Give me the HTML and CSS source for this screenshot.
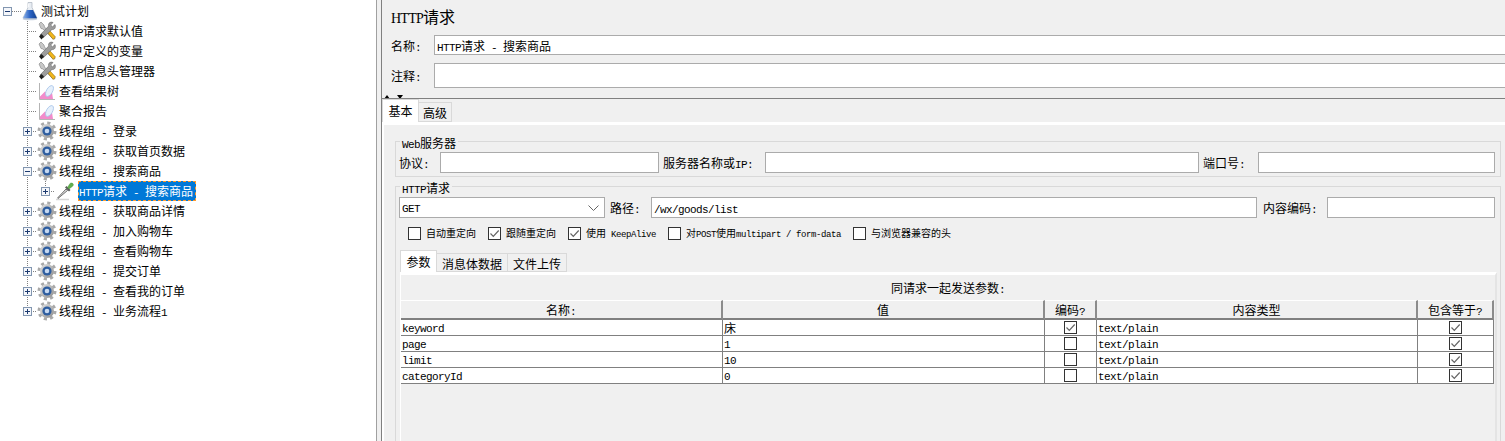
FILE: index.html
```html
<!DOCTYPE html>
<html lang="zh-CN">
<head>
<meta charset="utf-8">
<title>HTTP请求</title>
<link rel="stylesheet" href="styles.css">
</head>
<body>
<svg class="sprites" xmlns="http://www.w3.org/2000/svg" aria-hidden="true">
  <defs>
    <linearGradient id="liq" x1="0" x2="1" y1="0" y2="0"><stop offset="0" stop-color="#8fb4ea"/><stop offset=".5" stop-color="#2a63c4"/><stop offset="1" stop-color="#123f8e"/></linearGradient>
    <linearGradient id="gearg" x1="0" x2="1" y1="0" y2="1"><stop offset="0" stop-color="#e4e4e4"/><stop offset="1" stop-color="#8c8c8c"/></linearGradient>
  </defs>
  <symbol id="i-plus" viewBox="0 0 9 9"><rect x=".5" y=".5" width="8" height="8" fill="#f4f6fa" stroke="#8296b0"/><path d="M2 4.500h5M4.500 2v5" stroke="#1c3a70" fill="none"/></symbol>
  <symbol id="i-minus" viewBox="0 0 9 9"><rect x=".5" y=".5" width="8" height="8" fill="#f4f6fa" stroke="#8296b0"/><path d="M2 4.500h5" stroke="#1c3a70" fill="none"/></symbol>
  <symbol id="i-flask" viewBox="0 0 20 20"><ellipse cx="10" cy="18" rx="7.500" ry="1.300" fill="#c4cede"/><path d="M8 1.500h4v5l5 10.500H3L8 6.500z" fill="#e8edf3" stroke="#a9b3bf" stroke-width=".7"/><path d="M7 9h6l4 8.300H3z" fill="url(#liq)"/><path d="M8.700 2.500v4" stroke="#fff"/></symbol>
  <symbol id="i-tools" viewBox="0 0 20 20"><path d="M2 3l2-2 3 3 .5 2L17 15.500l1 2.500-2.500-.5L6 8 4 7.500z" fill="#c8c8c8" stroke="#6d6d6d" stroke-width=".5"/><path d="M10.500 11.500l2-2 6 6.500-2.300 2.500z" fill="#f2b71c" stroke="#8f6a08" stroke-width=".6"/><path d="M18 3.500l-2.500 2.300-1.800-1.800L16 1.500c-2-1-4.500 0-4.500 2.300 0 .8.200 1.200.2 1.200L3 14l3 3 9-8.600c2.500.6 4.200-1.800 3-4.900z" fill="#9d9d9d" stroke="#555" stroke-width=".5"/><path d="M2 15.500l2.500-2.500 2.500 2.500L4.500 18.500z" fill="#222"/></symbol>
  <symbol id="i-graph" viewBox="0 0 20 20"><path d="M2.500 2v16.500H18" stroke="#b4b4b4" fill="none"/><path d="M3 18v-2.500l5-5 3 2 4-1 1 6.500z" fill="#f28ccb"/><ellipse cx="12.500" cy="10" rx="3" ry="6" transform="rotate(30 12.500 10)" fill="#e6f0fb" stroke="#a6c4e8" stroke-width=".8"/></symbol>
  <symbol id="i-gear" viewBox="0 0 20 20"><circle cx="10" cy="10" r="8" fill="none" stroke="#a9a9a9" stroke-width="3" stroke-dasharray="3.100 3.180"/><circle cx="10" cy="10" r="7" fill="url(#gearg)"/><circle cx="10" cy="10" r="4.600" fill="#2e5d9f"/><circle cx="10" cy="10" r="2.300" fill="#c7d9f1"/></symbol>
  <symbol id="i-drop" viewBox="0 0 20 20"><path d="M1 18.500h13" stroke="#d6d6d6" stroke-width="1.500"/><path d="M3 17.500L2.500 17 11 8l1.500 1.500z" fill="#d9d9d9" stroke="#555" stroke-width=".8"/><path d="M10 6.500L14 10.500l1.500-1.500L11.500 5z" fill="#5b5b5b"/><path d="M12.500 6.500L15 2.500c1-1 3-.5 3.300.8.200 1-.3 1.700-1 2.200l-3.300 2.500z" fill="#62b04e" stroke="#3c8a2f" stroke-width=".4"/></symbol>
  <symbol id="i-box" viewBox="0 0 13 13"><rect x=".5" y=".5" width="12" height="12" fill="#fff" stroke="#333"/></symbol>
  <symbol id="i-chk" viewBox="0 0 13 13"><rect x=".5" y=".5" width="12" height="12" fill="#fff" stroke="#333"/><path d="M2.500 6.500L5.300 9.300 10.700 3.500" fill="none" stroke="#666" stroke-width="1.200"/></symbol>
</svg>

<nav class="tree">
  <div class="row d0"><svg class="exp"><use href="#i-minus"/></svg><svg class="ico ico-root"><use href="#i-flask"/></svg><span class="lab">测试计划</span></div>
  <div class="row d1 guide"><span class="noexp"></span><svg class="ico"><use href="#i-tools"/></svg><span class="lab"><span class="l">HTTP</span>请求默认值</span></div>
  <div class="row d1 guide"><span class="noexp"></span><svg class="ico"><use href="#i-tools"/></svg><span class="lab">用户定义的变量</span></div>
  <div class="row d1 guide"><span class="noexp"></span><svg class="ico"><use href="#i-tools"/></svg><span class="lab"><span class="l">HTTP</span>信息头管理器</span></div>
  <div class="row d1 guide"><span class="noexp"></span><svg class="ico"><use href="#i-graph"/></svg><span class="lab">查看结果树</span></div>
  <div class="row d1 guide"><span class="noexp"></span><svg class="ico"><use href="#i-graph"/></svg><span class="lab">聚合报告</span></div>
  <div class="row d1 guide"><svg class="exp"><use href="#i-plus"/></svg><svg class="ico"><use href="#i-gear"/></svg><span class="lab">线程组<span class="l"> - </span>登录</span></div>
  <div class="row d1 guide"><svg class="exp"><use href="#i-plus"/></svg><svg class="ico"><use href="#i-gear"/></svg><span class="lab">线程组<span class="l"> - </span>获取首页数据</span></div>
  <div class="row d1 guide"><svg class="exp"><use href="#i-minus"/></svg><svg class="ico"><use href="#i-gear"/></svg><span class="lab">线程组<span class="l"> - </span>搜索商品</span></div>
  <div class="row d2 guide"><svg class="exp"><use href="#i-plus"/></svg><svg class="ico"><use href="#i-drop"/></svg><span class="lab sel"><span class="l">HTTP</span>请求<span class="l"> - </span>搜索商品</span></div>
  <div class="row d1 guide"><svg class="exp"><use href="#i-plus"/></svg><svg class="ico"><use href="#i-gear"/></svg><span class="lab">线程组<span class="l"> - </span>获取商品详情</span></div>
  <div class="row d1 guide"><svg class="exp"><use href="#i-plus"/></svg><svg class="ico"><use href="#i-gear"/></svg><span class="lab">线程组<span class="l"> - </span>加入购物车</span></div>
  <div class="row d1 guide"><svg class="exp"><use href="#i-plus"/></svg><svg class="ico"><use href="#i-gear"/></svg><span class="lab">线程组<span class="l"> - </span>查看购物车</span></div>
  <div class="row d1 guide"><svg class="exp"><use href="#i-plus"/></svg><svg class="ico"><use href="#i-gear"/></svg><span class="lab">线程组<span class="l"> - </span>提交订单</span></div>
  <div class="row d1 guide"><svg class="exp"><use href="#i-plus"/></svg><svg class="ico"><use href="#i-gear"/></svg><span class="lab">线程组<span class="l"> - </span>查看我的订单</span></div>
  <div class="row d1 guide last"><svg class="exp"><use href="#i-plus"/></svg><svg class="ico"><use href="#i-gear"/></svg><span class="lab">线程组<span class="l"> - </span>业务流程<span class="l">1</span></span></div>
</nav>

<div class="split"></div>

<main class="main">
  <header class="head">
    <h1 class="title"><span class="t16">HTTP</span>请求</h1>
    <div class="nrow nrow-name"><span class="nlab">名称<span class="l">:</span></span><div class="field fill"><span class="l">HTTP</span>请求<span class="l"> - </span>搜索商品</div></div>
    <div class="nrow nrow-note"><span class="nlab">注释<span class="l">:</span></span><div class="field fill"></div></div>
    <div class="arrows"><i class="up"></i><i class="down"></i></div>
  </header>

  <div class="tabs outer">
    <div class="tab on">基本</div>
    <div class="tab">高级</div>
  </div>

  <section class="pane">
    <div class="group g1">
      <span class="legend"><span class="l">Web</span>服务器</span>
      <div class="grid-server">
        <span>协议<span class="l">:</span></span><div class="field"></div>
        <span class="pl">服务器名称或<span class="l">IP:</span></span><div class="field"></div>
        <span class="pl">端口号<span class="l">:</span></span><div class="field"></div>
      </div>
    </div>

    <div class="group g2">
      <span class="legend"><span class="l">HTTP</span>请求</span>
      <div class="grid-path">
        <div class="field combo"><span class="l">GET</span><svg class="chev" viewBox="0 0 11 6"><path d="M.5.5l5 5 5-5" fill="none" stroke="#666"/></svg></div>
        <span class="pl5">路径<span class="l">:</span></span><div class="field"><span class="l">/wx/goods/list</span></div>
        <span class="pl6">内容编码<span class="l">:</span></span><div class="field"></div>
      </div>
      <div class="checks">
        <label class="ck"><svg class="box"><use href="#i-box"/></svg><span>自动重定向</span></label>
        <label class="ck"><svg class="box"><use href="#i-chk"/></svg><span>跟随重定向</span></label>
        <label class="ck"><svg class="box"><use href="#i-chk"/></svg><span>使用<span class="s"> KeepAlive</span></span></label>
        <label class="ck"><svg class="box"><use href="#i-box"/></svg><span>对<span class="s">POST</span>使用<span class="s">multipart / form-data</span></span></label>
        <label class="ck"><svg class="box"><use href="#i-box"/></svg><span>与浏览器兼容的头</span></label>
      </div>

      <div class="tabs inner">
        <div class="tab on">参数</div>
        <div class="tab">消息体数据</div>
        <div class="tab">文件上传</div>
      </div>
      <div class="ipane">
        <div class="cap">同请求一起发送参数<span class="l">:</span></div>
        <table class="tbl">
          <colgroup><col class="c1"><col class="c2"><col class="c3"><col class="c4"><col class="c5"></colgroup>
          <thead><tr><th>名称<span class="l">:</span></th><th>值</th><th>编码<span class="l">?</span></th><th>内容类型</th><th>包含等于<span class="l">?</span></th></tr></thead>
          <tbody>
            <tr><td><span class="l">keyword</span></td><td>床</td><td class="ctr"><svg class="box"><use href="#i-chk"/></svg></td><td><span class="l">text/plain</span></td><td class="ctr"><svg class="box"><use href="#i-chk"/></svg></td></tr>
            <tr><td><span class="l">page</span></td><td><span class="l">1</span></td><td class="ctr"><svg class="box"><use href="#i-box"/></svg></td><td><span class="l">text/plain</span></td><td class="ctr"><svg class="box"><use href="#i-chk"/></svg></td></tr>
            <tr><td><span class="l">limit</span></td><td><span class="l">10</span></td><td class="ctr"><svg class="box"><use href="#i-box"/></svg></td><td><span class="l">text/plain</span></td><td class="ctr"><svg class="box"><use href="#i-chk"/></svg></td></tr>
            <tr><td><span class="l">categoryId</span></td><td><span class="l">0</span></td><td class="ctr"><svg class="box"><use href="#i-box"/></svg></td><td><span class="l">text/plain</span></td><td class="ctr"><svg class="box"><use href="#i-chk"/></svg></td></tr>
          </tbody>
        </table>
      </div>
    </div>
  </section>
</main>
</body>
</html>
```

FILE: styles.css
```css
* { box-sizing: border-box; }
html, body { margin: 0; height: 441px; overflow: hidden; }
body {
  display: flex;
  background: #f0f0f0;
  color: #000;
  font: 12px/16px "Noto Sans CJK SC", "Liberation Sans", sans-serif;
}
.sprites { width: 0; height: 0; flex: none; }
.l {
  font-family: "Liberation Mono", monospace;
  font-size: 11px;
  line-height: 1;
  letter-spacing: -0.6px;
  white-space: pre;
}
.s {
  font-family: "Liberation Mono", monospace;
  font-size: 9px;
  line-height: 1;
  letter-spacing: -0.4px;
  white-space: pre;
}
.t16 {
  font-family: "Liberation Serif", serif;
  font-size: 14px;
  letter-spacing: -0.75px;
}

/* tree */
.tree { width: 376px; flex: none; background: #fff; padding-top: 1px; }
.row { display: flex; align-items: center; height: 20px; background-repeat: no-repeat; }
.d0 {
  padding-left: 3px;
  background-image: repeating-linear-gradient(to right, #808080 0 1px, transparent 1px 2px);
  background-size: 9px 1px;
  background-position: 12px 10px;
}
.d1 { padding-left: 23px; }
.d2 { padding-left: 41px; }
.guide {
  background-image:
    repeating-linear-gradient(to bottom, #808080 0 1px, transparent 1px 2px),
    repeating-linear-gradient(to right, #808080 0 1px, transparent 1px 2px);
  background-size: 1px 100%, 10px 1px;
  background-position: 27px 0, 27px 10px;
  background-repeat: no-repeat;
}
.d2.guide {
  background-image:
    repeating-linear-gradient(to bottom, #808080 0 1px, transparent 1px 2px),
    repeating-linear-gradient(to bottom, #808080 0 1px, transparent 1px 2px),
    repeating-linear-gradient(to right, #808080 0 1px, transparent 1px 2px);
  background-size: 1px 100%, 1px 10px, 10px 1px;
  background-position: 27px 0, 45px 0, 45px 10px;
}
.last.guide { background-size: 1px 11px, 10px 1px; }
.exp, .noexp { width: 9px; height: 9px; flex: none; }
.ico { width: 20px; height: 20px; flex: none; margin-left: 5px; }
.ico-root { margin-left: 8px; }
.lab { margin-left: 2px; line-height: 18px; white-space: nowrap; }
.ico-root + .lab { margin-left: 1px; }
.sel {
  margin-left: 3px;
  height: 20px;
  padding: 0 2px 0 0;
  color: #fff;
  background: #0078d7;
  border: 1px dashed #ff9a2e;
}

/* splitter */
.split { width: 5px; flex: none; border-left: 1px solid #a0a0a0; }

/* main */
.main { flex: 1; min-width: 0; border-left: 1px solid #808080; }
.head { height: 99px; border-bottom: 1px solid #808080; overflow: hidden; }
.title { margin: 0; height: 35px; padding: 6px 0 0 9px; font-size: 16px; line-height: 20px; font-weight: 400; }
.nrow { display: flex; align-items: center; }
.nrow-name { height: 20px; }
.nrow-note { height: 25px; margin-top: 8px; }
.nlab { width: 52px; padding: 1px 0 0 9px; flex: none; }
.field {
  height: 100%;
  min-width: 0;
  background: #fff;
  border: 1px solid #ababab;
  padding-left: 2px;
  line-height: 19px;
  white-space: nowrap;
  overflow: hidden;
}
.fill { flex: 1; margin-right: -2px; }
.arrows { display: flex; align-items: flex-start; height: 3px; margin-top: 7px; padding-left: 2px; overflow: hidden; }
.arrows i { display: block; width: 0; height: 0; border-style: solid; border-color: transparent; }
.up { border-width: 0 3px 4px; border-bottom-color: #000 !important; }
.down { margin-left: 7px; border-width: 4px 3px 0; border-top-color: #000 !important; }

/* tabs */
.tabs { display: flex; align-items: flex-end; }
.tab {
  height: 20px;
  padding: 0 5px;
  background: #f0f0f0;
  border: 1px solid #d9d9d9;
  border-left: 0;
  line-height: 19px;
  text-align: center;
  white-space: nowrap;
}
.tab.on {
  height: 23px;
  padding: 0;
  background: #fff;
  border-left: 1px solid #d9d9d9;
  border-bottom: 0;
  line-height: 21px;
}
.outer { height: 23px; }
.outer .tab:not(.on) { width: 33px; padding: 0; }
.outer .tab.on { width: 37px; }
.inner { height: 22px; margin: 10px 0 0 4px; }
.inner .tab { height: 19px; }
.inner .tab.on { height: 22px; width: 37px; }

/* panes */
.pane {
  height: 319px;
  overflow: hidden;
  border-top: 3px solid #fff;
  border-left: 2px solid #fff;
  padding: 16px 4px 0 11px;
}
.group { position: relative; border: 1px solid #d9d9d9; }
.g1 { height: 36px; padding: 10px 0 0 3px; }
.g2 { height: 300px; margin-top: 9px; padding: 10px 0 0 0; }
.legend {
  position: absolute;
  top: -6px;
  left: 4px;
  padding: 0 2px;
  background: #f0f0f0;
  line-height: 14px;
}
.grid-server, .grid-path { display: grid; height: 21px; align-items: center; }
.grid-server { grid-template-columns: 41px 219px 106px 434px 59px 237px; }
.grid-path { margin-left: 3px; grid-template-columns: 206px 46px 606px 70px 168px; }
.pl { padding-left: 4px; white-space: nowrap; }
.pl5 { padding-left: 5px; white-space: nowrap; }
.pl6 { padding-left: 6px; white-space: nowrap; }
.combo { display: flex; align-items: center; justify-content: space-between; padding-right: 5px; }
.combo .l { padding-top: 3px; }
.chev { width: 11px; height: 6px; flex: none; }
.checks { display: flex; gap: 12px; height: 13px; margin: 9px 0 0 12px; font-size: 10px; line-height: 12px; }
.ck { display: flex; gap: 5px; white-space: nowrap; }
.box { display: block; width: 13px; height: 13px; flex: none; }
.ipane {
  height: 180px;
  margin: 0 3px 0 4px;
  border-top: 3px solid #fff;
  border-left: 1px solid #fff;
  border-right: 2px solid #e4e4e4;
}
.cap { height: 25px; line-height: 25px; text-align: center; }

/* table */
.tbl { border-collapse: separate; border-spacing: 0; table-layout: fixed; width: 1093px; }
.c1, .c2 { width: 322px; }
.c3 { width: 52px; }
.c4 { width: 321px; }
.c5 { width: 76px; }
.tbl th {
  height: 20px;
  padding: 0;
  font-weight: 400;
  line-height: 17px;
  background: #f0f0f0;
  border-top: 1px solid #fff;
  border-bottom: 2px solid #808080;
  border-right: 2px solid #8c8c8c;
}
.tbl td {
  height: 16px;
  padding: 0 0 0 1px;
  line-height: 15px;
  background: #fff;
  border-bottom: 1px solid #808080;
  border-right: 1px solid #808080;
  overflow: hidden;
  white-space: nowrap;
}
.tbl td .l { display: block; height: 15px; line-height: 18px; }
.tbl td.ctr { padding: 0 1px 0 0; }
.tbl td .box { margin: 1px auto; }
```
